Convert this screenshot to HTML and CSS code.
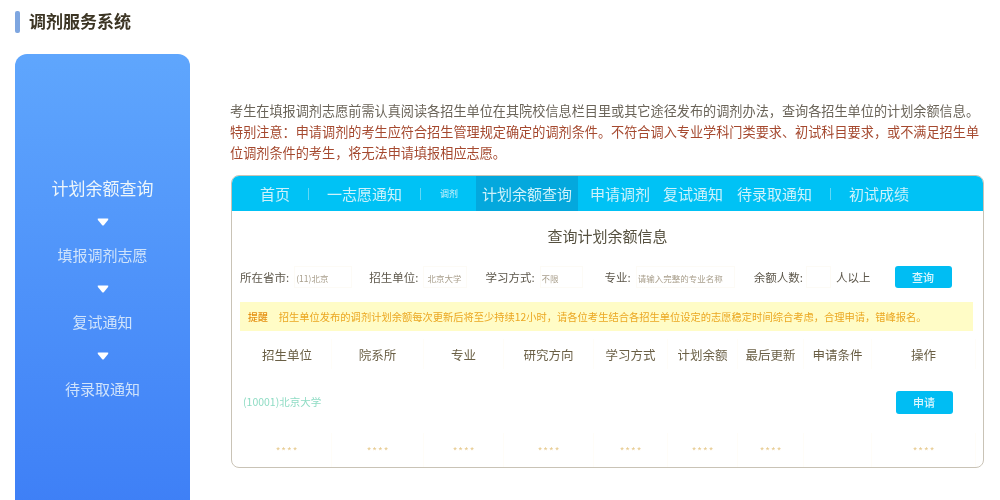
FILE: index.html
```html
<!DOCTYPE html>
<html lang="zh">
<head>
<meta charset="utf-8">
<title>调剂服务系统</title>
<link rel="stylesheet" href="styles.css">
</head>
<body>
<div class="page">
  <header class="top"><i class="mark"></i><h1>调剂服务系统</h1></header>
  <div class="layout">
    <aside class="side">
      <div class="step on">计划余额查询</div>
      <svg class="arrow" viewBox="0 0 12 8"><path d="M1.5 0.5h9q1.5 0 .6 1.4L7 7q-1 1-2 0L.9 1.9Q0 .5 1.500 .5z"/></svg>
      <div class="step">填报调剂志愿</div>
      <svg class="arrow" viewBox="0 0 12 8"><path d="M1.5 0.5h9q1.5 0 .6 1.4L7 7q-1 1-2 0L.9 1.900Q0 .5 1.500 .5z"/></svg>
      <div class="step">复试通知</div>
      <svg class="arrow" viewBox="0 0 12 8"><path d="M1.5 0.5h9q1.5 0 .6 1.4L7 7q-1 1-2 0L.9 1.900Q0 .5 1.500 .5z"/></svg>
      <div class="step">待录取通知</div>
    </aside>
    <main class="main">
      <div class="intro">
        <p class="gray">考生在填报调剂志愿前需认真阅读各招生单位在其院校信息栏目里或其它途径发布的调剂办法，查询各招生单位的计划余额信息。</p>
        <p class="red">特别注意：申请调剂的考生应符合招生管理规定确定的调剂条件。不符合调入专业学科门类要求、初试科目要求，或不满足招生单位调剂条件的考生，将无法申请填报相应志愿。</p>
      </div>
      <section class="panel">
        <nav class="nav">
          <a class="item">首页</a><i class="sep"></i>
          <a class="item">一志愿通知</a><i class="sep"></i>
          <a class="item small">调剂</a>
          <a class="item active">计划余额查询</a>
          <a class="item tight">申请调剂</a>
          <a class="item">复试通知</a>
          <a class="item">待录取通知</a><i class="sep"></i>
          <a class="item">初试成绩</a>
        </nav>
        <h2 class="title">查询计划余额信息</h2>
        <div class="form">
          <label class="lab">所在省市:</label><span class="inp w1">(11)北京</span>
          <label class="lab l2">招生单位:</label><span class="inp w2">北京大学</span>
          <label class="lab l3">学习方式:</label><span class="inp w3">不限</span>
          <label class="lab l4">专业:</label><span class="inp w4">请输入完整的专业名称</span>
          <label class="lab l5">余额人数:</label><span class="inp w5"></span>
          <label class="lab l6">人以上</label>
          <button class="btn b1">查询</button>
        </div>
        <div class="notice"><b>提醒</b><span>招生单位发布的调剂计划余额每次更新后将至少持续12小时，请各位考生结合各招生单位设定的志愿稳定时间综合考虑，合理申请，错峰报名。</span></div>
        <div class="table">
          <div class="th first">招生单位</div><div class="th">院系所</div><div class="th">专业</div><div class="th">研究方向</div><div class="th">学习方式</div><div class="th">计划余额</div><div class="th">最后更新</div><div class="th">申请条件</div><div class="th">操作</div>
          <div class="td school">(10001)北京大学</div><div class="td"></div><div class="td"></div><div class="td"></div><div class="td"></div><div class="td"></div><div class="td"></div><div class="td"></div><div class="td"><button class="btn b2">申请</button></div>
          <div class="st first">****</div><div class="st">****</div><div class="st">****</div><div class="st">****</div><div class="st">****</div><div class="st">****</div><div class="st">****</div><div class="st"></div><div class="st">****</div>
        </div>
      </section>
    </main>
  </div>
</div>
</body>
</html>
```
FILE: styles.css
```css
* { box-sizing: border-box; }
html, body { margin: 0; padding: 0; background: #fff; overflow: hidden; }
body { font-family: "Noto Sans CJK SC", "Liberation Sans", sans-serif; }
.page { width: 1000px; height: 500px; overflow: hidden; padding: 11px 16px 0 15px; filter: blur(0.45px); }

.top { display: flex; align-items: center; height: 22px; gap: 9px; }
.mark { width: 5px; height: 22px; border-radius: 2px; background: #7ea6e0; }
.top h1 { margin: -2px 0 0; font-size: 17px; line-height: 22px; font-weight: 700; color: #3c3524; }

.layout { display: flex; gap: 40px; margin-top: 21px; }

.side { width: 175px; height: 480px; flex: none; display: flex; flex-direction: column; align-items: center; padding-top: 122px; border-radius: 12px 12px 0 0; background: linear-gradient(180deg, #5fa6fd 0%, #3c7df6 100%); }
.step { height: 24px; line-height: 24px; font-size: 15px; color: #cfe3fb; white-space: nowrap; }
.step.on { font-size: 17px; color: #eef6fa; }
.arrow { width: 12px; height: 8px; margin: 18px 0 17px; fill: #fff; display: block; }

.main { width: 754px; flex: none; padding-top: 46px; }
.intro { width: 752px; font-size: 13.150px; line-height: 21px; }
.intro p { margin: 0; }
.gray { color: #6a6459; white-space: nowrap; }
.red { color: #a5492f; }

.panel { width: 753px; height: 293px; margin: 12px 0 0 1px; border: 1px solid #c9c3b6; border-radius: 8px; overflow: hidden; background: #fff; }

.nav { display: flex; align-items: stretch; height: 35px; padding-left: 21px; background: #00c2f5; color: #cdf2fb; font-size: 15px; }
.item { display: flex; align-items: center; margin: 0 7px; white-space: nowrap; }
.item.small { font-size: 9px; margin-left: 8px; width: 22px; }
.item.active { background: #04a8dd; padding: 0 6px; margin-right: 5px; }
.item.tight { margin-right: 6px; }
.sep { align-self: center; width: 1px; height: 12px; margin: 0 11px; background: #62d8f5; }

.title { margin: 13px 0 0; height: 24px; line-height: 24px; font-size: 15px; font-weight: 400; text-align: center; color: #55503f; }

.form { display: flex; align-items: center; height: 22px; margin-top: 18px; padding-left: 8px; }
.lab { font-size: 11.500px; color: #5d574b; white-space: nowrap; }
.inp { height: 22px; line-height: 22px; margin-left: 5px; padding-left: 1px; font-size: 8.500px; color: #a99f8c; border: 1px solid #fdfbf6; white-space: nowrap; overflow: hidden; }
.w1 { width: 58px; } .w2 { width: 44px; padding-left: 3px; } .w3 { width: 43px; } .w4 { width: 99px; } .w5 { width: 25px; margin-left: 3px; }
.l2 { margin-left: 17px; } .l3 { margin-left: 18px; } .l4 { margin-left: 22px; } .l5 { margin-left: 19px; } .l6 { margin-left: 5px; }
.btn { width: 57px; height: 22px; padding: 0; border: 0; border-radius: 3px; background: #00bdf3; color: #dcf7fd; font: 500 11px "Noto Sans CJK SC", sans-serif; }
.b1 { margin-left: 24px; }
.b2 { height: 23px; margin-top: 2px; }

.notice { display: flex; align-items: center; gap: 11px; width: 733px; height: 29px; margin: 14px 0 0 8px; padding-left: 8px; background: #fffcc6; font-size: 10.280px; color: #eba722; white-space: nowrap; }
.notice b { font-weight: 500; font-size: 9.900px; color: #e58f12; }

.table { display: grid; grid-template-columns: 100px 92px 80px 90px 74px 70px 66px 68px 104px; grid-template-rows: 30px 64px 34px; margin: 8px 0 0 0; }
.th { display: flex; align-items: center; justify-content: center; font-size: 12.500px; color: #6a5f45; border-right: 1px solid #fffdf8; }
.th.first { padding-left: 11px; }
.td { display: flex; align-items: center; justify-content: center; }
.school { justify-content: flex-start; padding-left: 11px; font-size: 10.500px; color: #8fdcc4; white-space: nowrap; }
.st { display: flex; align-items: center; justify-content: center; padding-left: 1px; font-size: 10px; letter-spacing: 1px; color: #e7ca8e; border-right: 1px solid #fffdf8; }
.st.first { padding-left: 11px; }
```
